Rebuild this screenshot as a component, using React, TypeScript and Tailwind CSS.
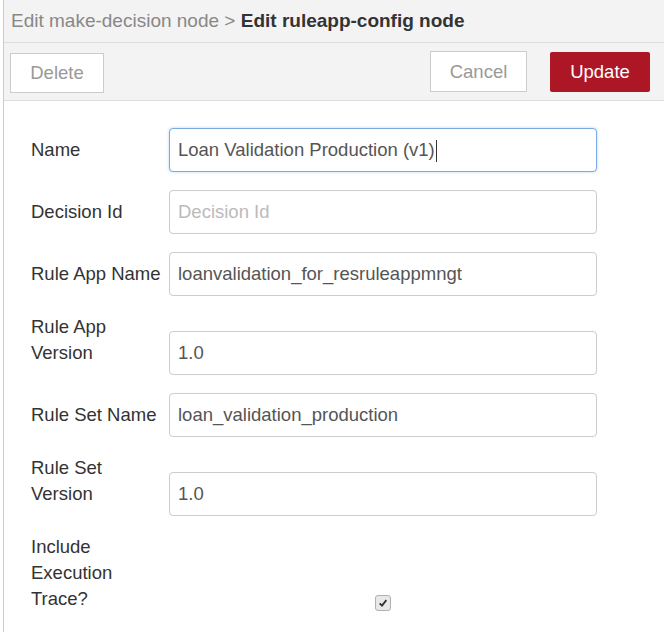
const fields = [
  { label: "Name", value: "Loan Validation Production (v1)", focused: true },
  { label: "Decision Id", placeholder: "Decision Id" },
  { label: "Rule App Name", value: "loanvalidation_for_resruleappmngt" },
  { label: "Rule App Version", value: "1.0" },
  { label: "Rule Set Name", value: "loan_validation_production" },
  { label: "Rule Set Version", value: "1.0" },
];

type Field = {
  label: string;
  value?: string;
  placeholder?: string;
  focused?: boolean;
};

const FormRow = ({ field }: { field: Field }) => (
  <div className="flex items-end mb-[18px]">
    <label className="w-[138px] pr-[4px] pb-[9px] leading-[26px] text-[#333] shrink-0">
      {field.label}
    </label>
    <div
      className={`w-[428px] h-[44px] rounded-[4px] border bg-white flex items-center px-[8px] ${
        field.focused
          ? "border-[#7aa9e3] shadow-[0_0_3px_rgba(102,175,233,0.5)]"
          : "border-[#ccc]"
      }`}
    >
      {field.value ? (
        <span className="text-[#555] whitespace-nowrap">
          {field.value}
          {field.focused && (
            <span className="inline-block w-px h-[22px] bg-[#333] align-middle ml-px" />
          )}
        </span>
      ) : (
        <span className="text-[#bbb]">{field.placeholder}</span>
      )}
    </div>
  </div>
);

const App = () => {
  return (
    <div
      className="w-[664px] h-[632px] overflow-hidden bg-white text-[18.5px]"
      style={{ fontFamily: '"Liberation Sans", Arial, sans-serif' }}
    >
      <div className="h-full ml-[3px] border-l border-[#ccc]">
        {/* Breadcrumb header */}
        <div className="h-[43px] bg-[#f3f3f3] border-b border-[#ddd] flex items-center pl-[7px] text-[19px]">
          <span className="text-[#888]">Edit make-decision node &gt;&nbsp;</span>
          <span className="font-bold text-[#333]">Edit ruleapp-config node</span>
        </div>

        {/* Toolbar */}
        <div className="h-[58px] bg-[#f3f3f3] border-b border-[#ddd] flex items-center pl-[6px] pr-[14px]">
          <button className="w-[94px] h-[40px] mt-[2px] border border-[#ccc] bg-white text-[#999]">
            Delete
          </button>
          <div className="flex-1" />
          <button className="w-[97px] h-[41px] border border-[#ccc] bg-white text-[#999]">
            Cancel
          </button>
          <button className="w-[100px] h-[40px] ml-[23px] rounded-[2px] bg-[#ad1625] text-white">
            Update
          </button>
        </div>

        {/* Form */}
        <div className="pt-[27px] pl-[27px]">
          {fields.map((f) => (
            <FormRow key={f.label} field={f} />
          ))}
          <div className="flex items-end">
            <label className="w-[138px] pr-[4px] pb-[9px] leading-[26px] text-[#333] shrink-0">
              Include Execution Trace?
            </label>
            <div className="w-[428px] flex justify-center mb-[10px]">
              <span className="w-[16px] h-[16px] rounded-[3px] border border-[#b0b0b0] bg-[#e8e8e8] flex items-center justify-center">
                <svg viewBox="0 0 12 12" className="w-[10px] h-[10px]">
                  <path
                    d="M2 6.5 L4.8 9.2 L10 2.5"
                    fill="none"
                    stroke="#333"
                    strokeWidth="2.2"
                  />
                </svg>
              </span>
            </div>
          </div>
        </div>
      </div>
    </div>
  );
};

export default App;
